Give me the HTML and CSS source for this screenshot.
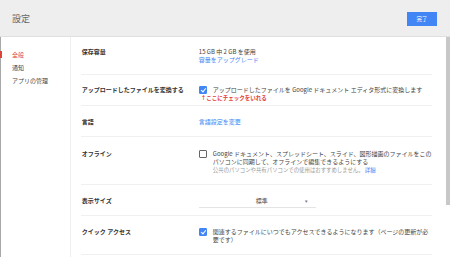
FILE: index.html
```html
<!DOCTYPE html>
<html lang="ja">
<head>
    <meta charset="UTF-8" />
    <title>設定</title>
    <link rel="stylesheet" href="styles.css">
</head>
<body>
    <div class="header">
        <div class="title">設定</div>
        <button class="btn-done">完了</button>
    </div>

    <div class="main">
        <div class="sidebar">
            <div class="nav-item active">全般</div>
            <div class="nav-item">通知</div>
            <div class="nav-item">アプリの管理</div>
        </div>

        <div class="content">
            <div class="row row-storage">
                <div class="label">保存容量</div>
                <div class="value">
                    <div>15 GB 中 2 GB を使用</div>
                    <div class="link">容量をアップグレード</div>
                </div>
            </div>

            <div class="row row-convert">
                <div class="label">アップロードしたファイルを変換する</div>
                <div class="value">
                    <div class="check-line">
                        <span class="checkbox checked"></span>
                        <span>アップロードしたファイルを Google ドキュメント エディタ形式に変換します</span>
                    </div>
                    <div class="note">↑ここにチェックをいれる</div>
                </div>
            </div>

            <div class="row row-lang">
                <div class="label">言語</div>
                <div class="value">
                    <div class="link">言語設定を変更</div>
                </div>
            </div>

            <div class="row row-offline">
                <div class="label">オフライン</div>
                <div class="value">
                    <div class="check-line">
                        <span class="checkbox"></span>
                        <div>
                            <div class="line">Google ドキュメント、スプレッドシート、スライド、図形描画のファイルをこの</div>
                            <div class="line">パソコンに同期して、オフラインで編集できるようにする</div>
                            <div class="line hint">公共のパソコンや共有パソコンでの使用はおすすめしません。 <span class="link">詳細</span></div>
                        </div>
                    </div>
                </div>
            </div>

            <div class="row row-size">
                <div class="label">表示サイズ</div>
                <div class="value">
                    <div class="select">
                        <span class="select-text">標準</span>
                        <span class="select-arrow">▾</span>
                    </div>
                </div>
            </div>

            <div class="row row-quick">
                <div class="label">クイック アクセス</div>
                <div class="value">
                    <div class="check-line">
                        <span class="checkbox checked"></span>
                        <div>
                            <div class="line">関連するファイルにいつでもアクセスできるようになります（ページの更新が必</div>
                            <div class="line">要です）</div>
                        </div>
                    </div>
                </div>
            </div>
        </div>

        <div class="scrollbar">
            <div class="thumb"></div>
        </div>
    </div>
</body>
</html>
```

FILE: styles.css
```css
body { margin: 0; font-family: "Noto Sans CJK JP", "Noto Sans", sans-serif; color: #333; background: #fff; width: 450px; height: 257px; overflow: hidden; }

.header { height: 37px; background: #eeeeee; border-bottom: 1px solid #e0e0e0; box-sizing: border-box; display: flex; align-items: center; justify-content: space-between; padding: 0 13px 0 12px; }
.title { font-size: 9px; color: #666; margin-top: 1px; }
.btn-done { width: 30px; height: 14px; padding: 0; margin-top: 1px; border: none; background: #4285f4; color: #fff; font-family: inherit; font-size: 5.5px; }

.main { display: flex; height: 220px; }

.sidebar { width: 69px; border-left: 1px solid #a8a8a8; border-right: 1px solid #eeeeee; padding-top: 11px; }
.nav-item { position: relative; font-size: 6px; line-height: 13px; padding-left: 11px; color: #444; }
.nav-item.active { color: #db4437; }
.nav-item.active::before { content: ""; position: absolute; left: -1px; top: 3px; width: 2px; height: 7px; background: #db4437; }

.content { width: 352px; margin-left: 10px; }
.row { display: flex; box-sizing: border-box; overflow: hidden; border-bottom: 1px solid #f0f0f0; padding-top: 12px; font-size: 6px; line-height: 8px; }
.row-storage { height: 38px; padding-top: 11px; }
.row-convert { height: 31px; padding-top: 11px; }
.row-lang { height: 31px; }
.row-offline { height: 48px; padding-top: 13px; }
.row-size { height: 31px; }
.row-quick { height: 39px; }

.label { width: 117px; padding-left: 1px; font-weight: bold; color: #333; flex-shrink: 0; }
.value { flex: 1; color: #444; }
.link { color: #4285f4; }
.line { white-space: nowrap; }

.check-line { display: flex; align-items: flex-start; gap: 6px; }
.checkbox { width: 8px; height: 8px; box-sizing: border-box; border: 1px solid #666; border-radius: 1px; flex-shrink: 0; position: relative; }
.checkbox.checked { background: #4285f4; border-color: #4285f4; }
.checkbox.checked::after { content: ""; position: absolute; left: 2px; top: 0px; width: 2px; height: 4px; border: solid #fff; border-width: 0 1px 1px 0; transform: rotate(40deg); }

.note { color: #e53935; font-size: 5.5px; font-weight: bold; padding-left: 2px; }
.hint { font-size: 5.4px; color: #999; }

.select { width: 117px; display: flex; justify-content: space-between; align-items: center; border-bottom: 1px solid #e4e4e4; padding: 0 0 2px; }
.select-text { margin-left: 57px; color: #444; }
.select-arrow { font-size: 5px; color: #777; margin-right: 8px; }

.scrollbar { width: 4px; margin-left: 14px; }
.thumb { height: 168px; background: #c8c8c8; }
```
